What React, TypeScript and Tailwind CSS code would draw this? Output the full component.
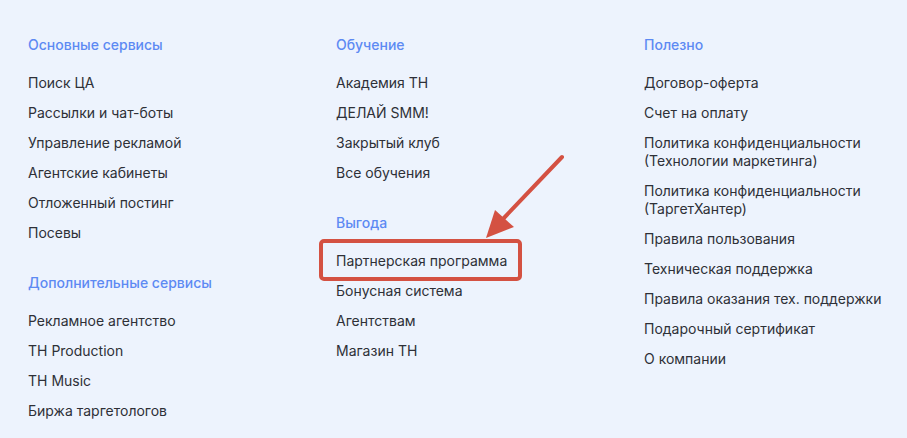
const columns: { title: string; items: string[][] }[][] = [
  [
    {
      title: 'Основные сервисы',
      items: [['Поиск ЦА'], ['Рассылки и чат-боты'], ['Управление рекламой'], ['Агентские кабинеты'], ['Отложенный постинг'], ['Посевы']],
    },
    {
      title: 'Дополнительные сервисы',
      items: [['Рекламное агентство'], ['TH Production'], ['TH Music'], ['Биржа таргетологов']],
    },
  ],
  [
    {
      title: 'Обучение',
      items: [['Академия TH'], ['ДЕЛАЙ SMM!'], ['Закрытый клуб'], ['Все обучения']],
    },
    {
      title: 'Выгода',
      items: [['Партнерская программа'], ['Бонусная система'], ['Агентствам'], ['Магазин TH']],
    },
  ],
  [
    {
      title: 'Полезно',
      items: [
        ['Договор-оферта'],
        ['Счет на оплату'],
        ['Политика конфиденциальности', '(Технологии маркетинга)'],
        ['Политика конфиденциальности', '(ТаргетХантер)'],
        ['Правила пользования'],
        ['Техническая поддержка'],
        ['Правила оказания тех. поддержки'],
        ['Подарочный сертификат'],
        ['О компании'],
      ],
    },
  ],
]

function Section({ title, items }: { title: string; items: string[][] }) {
  return (
    <div>
      <h4 className="text-[14px] leading-[18px] font-medium text-[#5d8af3] mb-[20px]">{title}</h4>
      <ul className="flex flex-col gap-[12px]">
        {items.map((lines) => (
          <li key={lines[0] + lines.length} className="text-[14px] leading-[18px] text-[#2e3037]">
            {lines.map((l) => (
              <div key={l}>{l}</div>
            ))}
          </li>
        ))}
      </ul>
    </div>
  )
}

export default function App() {
  return (
    <div
      className="relative w-[907px] h-[438px] overflow-hidden bg-[#edf3fd]"
      style={{ fontFamily: 'Inter, "Noto Sans", sans-serif' }}
    >
      <div className="flex pl-[28px] pt-[36px]">
        {columns.map((col, i) => (
          <div key={i} className="w-[308px] shrink-0 flex flex-col gap-[32px]">
            {col.map((s) => (
              <Section key={s.title} title={s.title} items={s.items} />
            ))}
          </div>
        ))}
      </div>

      {/* annotation */}
      <svg className="absolute inset-0 pointer-events-none" width="907" height="438" viewBox="0 0 907 438">
        <rect x="321" y="241" width="199" height="38" rx="3" fill="none" stroke="#d45142" strokeWidth="4" />
        <line x1="562" y1="157" x2="502" y2="220" stroke="#d45142" strokeWidth="4" strokeLinecap="round" />
        <polygon points="486,238 495,210 514,227" fill="#d45142" />
      </svg>
    </div>
  )
}
